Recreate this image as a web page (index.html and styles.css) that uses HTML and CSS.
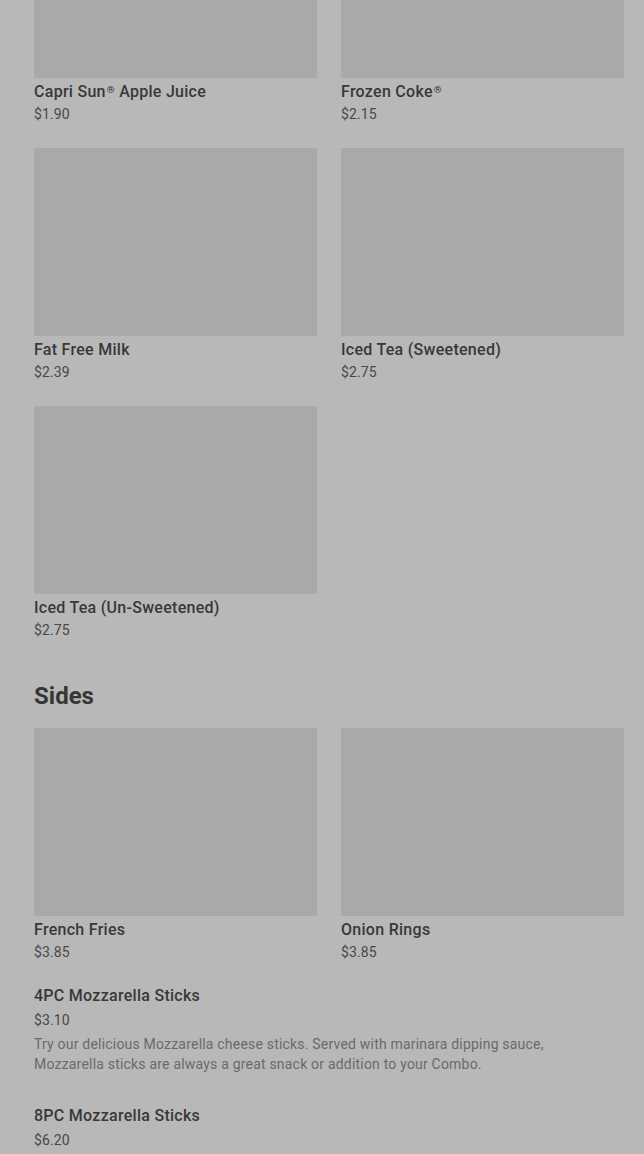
FILE: index.html
```html
<!DOCTYPE html>
<html lang="en">
<head>
<meta charset="utf-8">
<title>Menu</title>
<link rel="stylesheet" href="styles.css">
</head>
<body>
<main class="menu">
  <section class="section">
    <div class="grid grid-top">
      <article class="card">
        <div class="card-img"></div>
        <div class="card-name">Capri Sun<span class="reg">®</span> Apple Juice</div>
        <div class="card-price">$1.90</div>
      </article>
      <article class="card">
        <div class="card-img"></div>
        <div class="card-name">Frozen Coke<span class="reg">®</span></div>
        <div class="card-price">$2.15</div>
      </article>
      <article class="card">
        <div class="card-img"></div>
        <div class="card-name">Fat Free Milk</div>
        <div class="card-price">$2.39</div>
      </article>
      <article class="card">
        <div class="card-img"></div>
        <div class="card-name">Iced Tea (Sweetened)</div>
        <div class="card-price">$2.75</div>
      </article>
      <article class="card">
        <div class="card-img"></div>
        <div class="card-name">Iced Tea (Un-Sweetened)</div>
        <div class="card-price">$2.75</div>
      </article>
    </div>
  </section>

  <section class="section">
    <h2 class="section-title">Sides</h2>
    <div class="grid">
      <article class="card">
        <div class="card-img"></div>
        <div class="card-name">French Fries</div>
        <div class="card-price">$3.85</div>
      </article>
      <article class="card">
        <div class="card-img"></div>
        <div class="card-name">Onion Rings</div>
        <div class="card-price">$3.85</div>
      </article>
    </div>
    <div class="list">
      <article class="item">
        <div class="item-name">4PC Mozzarella Sticks</div>
        <div class="item-price">$3.10</div>
        <p class="item-desc">Try our delicious Mozzarella cheese sticks. Served with marinara dipping sauce, Mozzarella sticks are always a great snack or addition to your Combo.</p>
      </article>
      <article class="item">
        <div class="item-name">8PC Mozzarella Sticks</div>
        <div class="item-price">$6.20</div>
      </article>
    </div>
  </section>
</main>
</body>
</html>
```

FILE: styles.css
```css
html, body {
  margin: 0;
  padding: 0;
  background: #b8b8b8;
  overflow: hidden;
}

body {
  font-family: Roboto, "Liberation Sans", Arial, sans-serif;
  color: #363636;
}

.menu {
  padding: 0 20px 0 34px;
}

.grid {
  display: grid;
  grid-template-columns: 283px 283px;
  column-gap: 24px;
  row-gap: 24px;
}

.grid-top {
  margin-top: -110px;
}

.card {
  display: flex;
  flex-direction: column;
}

.card-img {
  height: 188px;
  background: #a9a9a9;
  margin-bottom: 2px;
}

.card-name,
.item-name {
  font-size: 16px;
  line-height: 24px;
  font-weight: 500;
  letter-spacing: 0.28px;
  color: #383838;
}

.reg {
  font-size: 0.62em;
  vertical-align: 0.45em;
  line-height: 0;
  margin-left: 1px;
}

.card-price,
.item-price {
  font-size: 14px;
  line-height: 20px;
  letter-spacing: 0.1px;
  color: #484848;
}

.section-title {
  margin: 40px 0 16px;
  font-size: 24px;
  line-height: 32px;
  font-weight: 700;
  color: #363636;
}

.list {
  display: flex;
  flex-direction: column;
  padding-top: 22px;
  gap: 30px;
}

.item-price {
  margin-top: 2px;
}

.item-desc {
  margin: 4px 0 0;
  font-size: 14px;
  line-height: 20px;
  letter-spacing: 0.2px;
  color: #6a6a6a;
  max-width: 560px;
}
```
